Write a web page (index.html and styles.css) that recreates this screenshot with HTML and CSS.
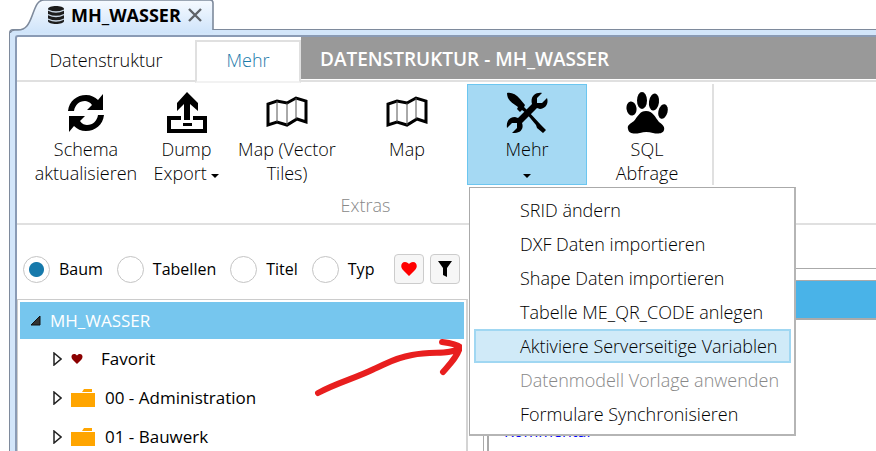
FILE: index.html
```html
<!DOCTYPE html>
<html lang="de">
  <head>
    <meta charset="UTF-8" />
    <meta name="viewport" content="width=device-width, initial-scale=1.0" />
    <title>MH_WASSER</title>
    <link rel="stylesheet" href="styles.css" />
  </head>
  <body>
    <div class="doc-tabs">
      <svg class="doc-tab-shape" width="206" height="33" viewBox="0 0 206 33">
        <defs>
          <linearGradient id="tabFill" x1="0" y1="0" x2="0" y2="1">
            <stop offset="0" stop-color="#f6faff" />
            <stop offset="1" stop-color="#cfe4fa" />
          </linearGradient>
        </defs>
        <path d="M0 33V32Q1 30 5 30H8C16 30 19 24 22 16C26 5 28 0 34 0H200Q203 0 203 3V33Z" fill="url(#tabFill)" />
        <path d="M0 33Q1 30 5 30H8C16 30 19 24 22 16C26 5 28 0 34 0H200Q203 0 203 3V30" fill="none" stroke="#7e8a9c" stroke-width="1.6" />
      </svg>
      <div class="doc-tab">
        <svg width="16" height="18" viewBox="0 0 16 18">
          <path d="M0 3C0-1 16-1 16 3V15C16 19 0 19 0 15Z" fill="#1c1c1c" />
          <path d="M0 4Q8 8 16 4M0 8.500Q8 12.500 16 8.500M0 13Q8 17 16 13" fill="none" stroke="#c9d6e4" stroke-width="1.300" />
        </svg>
        <span>MH_WASSER</span>
        <button class="close-btn" aria-label="Schließen">
          <svg width="14" height="14" viewBox="0 0 14 14">
            <path d="M1 1L13 13M13 1L1 13" stroke="#5f6368" stroke-width="2.400" />
          </svg>
        </button>
      </div>
    </div>

    <div class="frame">
      <div class="frame-inner">
        <header class="ribbon-tabs">
          <button class="ribbon-tab">Datenstruktur</button>
          <button class="ribbon-tab active">Mehr</button>
          <div class="ribbon-title">DATENSTRUKTUR - MH_WASSER</div>
        </header>

        <div class="ribbon">
          <div class="group">
            <div class="tools">
              <button class="tool tool-schema">
                <svg width="42" height="42" viewBox="0 0 42 42">
                  <g id="arrowHalf">
                    <path d="M3 19C4 9 12 3 21 3C26 3 30 5 33 8L38 2V18H22L27 13C25 10 22 9 20 9C14 9 10 13 9 19Z" />
                  </g>
                  <use href="#arrowHalf" transform="rotate(180 21 21)" />
                </svg>
                <span>Schema<br />aktualisieren</span>
              </button>
              <button class="tool tool-dump">
                <svg width="42" height="42" viewBox="0 0 42 42">
                  <path d="M21 0L32 11V19L24 12V28H18V12L11 19V11Z" />
                  <path d="M1 24H15V28H5V37H37V28H27V24H41V41H1Z" />
                  <path d="M17 31H26V34H17Z" />
                </svg>
                <span>Dump<br />Export <i class="caret"></i></span>
              </button>
              <button class="tool">
                <svg width="42" height="42" viewBox="0 0 42 42">
                  <path d="M2 12V33L11 30L21 33L31 27L40 30V9L30 6L21 11L11 9Z" fill="none" stroke="#000" stroke-width="3" />
                  <path d="M11 9V30M21 11V33M30 6V27" stroke="#555" stroke-width="1" />
                </svg>
                <span>Map (Vector<br />Tiles)</span>
              </button>
              <button class="tool">
                <svg width="42" height="42" viewBox="0 0 42 42">
                  <path d="M2 12V33L11 30L21 33L31 27L40 30V9L30 6L21 11L11 9Z" fill="none" stroke="#000" stroke-width="3" />
                  <path d="M11 9V30M21 11V33M30 6V27" stroke="#555" stroke-width="1" />
                </svg>
                <span>Map</span>
              </button>
              <button class="tool open" aria-expanded="true">
                <svg width="42" height="42" viewBox="0 0 42 42">
                  <path d="M1 1C5 0 10 2 14 7L19 13L18 15L22 19L35 33L40 38L37 41L31 36L30 33L20 21L16 18L14 20L11 17L12 15C6 11 1 8 1 1Z" />
                  <path d="M36 1L31 6V11H36L41 6C43 12 39 17 34 17L31 16L16 31C18 36 15 41 9 41H6L11 36V31H6L1 36C0 30 3 25 9 25L12 26L26 12C24 5 29 0 36 1Z" />
                </svg>
                <span>Mehr<br /><i class="caret"></i></span>
              </button>
              <button class="tool">
                <svg width="42" height="42" viewBox="0 0 42 42">
                  <ellipse cx="5.500" cy="16.500" rx="5" ry="7" transform="rotate(-8 5.500 16.500)" />
                  <ellipse cx="16" cy="8.500" rx="5" ry="8.500" />
                  <ellipse cx="28" cy="10" rx="5" ry="8.500" transform="rotate(8 28 10)" />
                  <ellipse cx="37" cy="19.500" rx="4.500" ry="7.500" transform="rotate(15 37 19.500)" />
                  <path d="M20 19C27 19 29 25 33 30C37 33 39 35 38 38C37 42 31 42 27 41Q20 39 14 41C8 42 3 42 2 37C1 33 4 32 8 29C12 24 14 19 20 19Z" />
                </svg>
                <span>SQL<br />Abfrage</span>
              </button>
            </div>
            <div class="group-name">Extras</div>
          </div>
        </div>

        <main class="content">
          <section class="left">
            <form class="filter" onsubmit="return false">
              <label><input type="radio" name="view" checked />Baum</label>
              <label><input type="radio" name="view" />Tabellen</label>
              <label><input type="radio" name="view" />Titel</label>
              <label><input type="radio" name="view" />Typ</label>
              <div class="filter-btns">
                <button aria-label="Favoriten">
                  <svg width="16" height="14" viewBox="0 0 16 14">
                    <path d="M8 14L2 8C-1 5 0 0 4 0C6 0 7 1 8 2C9 1 10 0 12 0C16 0 17 5 14 8Z" fill="#f00" />
                  </svg>
                </button>
                <button aria-label="Filter">
                  <svg width="14" height="16" viewBox="0 0 14 16">
                    <path d="M0 0H14L9 7V16L5 14V7Z" />
                  </svg>
                </button>
              </div>
            </form>
            <ul class="tree">
              <li class="selected">
                <svg width="11" height="11" viewBox="0 0 11 11"><path d="M10 1V10H1Z" fill="#333" stroke="#111" /></svg>
                MH_WASSER
              </li>
              <li class="node">
                <svg width="9" height="14" viewBox="0 0 9 14"><path d="M1 1L8 7L1 13Z" fill="none" stroke="#222" stroke-width="1.500" /></svg>
                <svg class="heart" width="12" height="10" viewBox="0 0 16 14"><path d="M8 14L2 8C-1 5 0 0 4 0C6 0 7 1 8 2C9 1 10 0 12 0C16 0 17 5 14 8Z" fill="#8b0000" /></svg>
                Favorit
              </li>
              <li class="node">
                <svg width="9" height="14" viewBox="0 0 9 14"><path d="M1 1L8 7L1 13Z" fill="none" stroke="#222" stroke-width="1.500" /></svg>
                <svg class="folder" width="24" height="18" viewBox="0 0 24 18"><path d="M0 4H24V18H0ZM11 3L13 0H21V3Z" fill="#ffa500" /></svg>
                00 - Administration
              </li>
              <li class="node">
                <svg width="9" height="14" viewBox="0 0 9 14"><path d="M1 1L8 7L1 13Z" fill="none" stroke="#222" stroke-width="1.500" /></svg>
                <svg class="folder" width="24" height="18" viewBox="0 0 24 18"><path d="M0 4H24V18H0ZM11 3L13 0H21V3Z" fill="#ffa500" /></svg>
                01 - Bauwerk
              </li>
            </ul>
          </section>
          <section class="right">
            <div class="panel">
              <div class="panel-head"></div>
              <div class="panel-body">Kommentar</div>
            </div>
          </section>
        </main>
      </div>
    </div>

    <ul class="menu">
      <li><button>SRID ändern</button></li>
      <li><button>DXF Daten importieren</button></li>
      <li><button>Shape Daten importieren</button></li>
      <li><button>Tabelle ME_QR_CODE anlegen</button></li>
      <li><button class="hover">Aktiviere Serverseitige Variablen</button></li>
      <li><button disabled>Datenmodell Vorlage anwenden</button></li>
      <li><button>Formulare Synchronisieren</button></li>
    </ul>

    <svg class="marker" width="150" height="62" viewBox="0 0 150 62">
      <path d="M6 55C24 45 44 40 62 31C74 26 82 20 100 17C122 13 136 17 146 11M130 4C138 5 145 6 148 9C146 18 138 26 131 34" fill="none" stroke="#e81e1e" stroke-width="6" stroke-linecap="round" stroke-linejoin="round" />
    </svg>
  </body>
</html>
```
FILE: styles.css
```css
* {
  box-sizing: border-box;
}
body {
  margin: 0;
  position: relative;
  min-height: 100vh;
  overflow: hidden;
  background-color: #fff;
  color: #000;
  font-family: "Open Sans", "Noto Sans", sans-serif;
  font-size: 17px;
  display: flex;
  flex-direction: column;
}
button {
  margin: 0;
  padding: 0;
  border: 0;
  background: none;
  color: inherit;
  font: inherit;
}
ul {
  list-style: none;
  margin: 0;
  padding: 0;
}
svg {
  flex: none;
}

/* document tab */
.doc-tabs {
  position: relative;
  height: 29px;
}
.doc-tab-shape {
  position: absolute;
  left: 10px;
  top: 0;
  z-index: 1;
}
.doc-tab {
  position: relative;
  z-index: 2;
  display: flex;
  align-items: center;
  gap: 7px;
  height: 30px;
  padding-left: 48px;
  font-size: 18px;
  font-weight: 700;
}
.close-btn {
  display: flex;
}

/* window frame */
.frame {
  flex: 1;
  display: flex;
  margin-left: 9px;
  padding: 5px 0 0 5px;
  border: 1px solid #7e8a9c;
  border-width: 1px 0 0 1px;
  border-radius: 4px 0 0 0;
  background-color: #d3e6fa;
}
.frame-inner {
  flex: 1;
  display: flex;
  flex-direction: column;
  border: 2px solid #8a9bb5;
  border-width: 2px 0 0 2px;
  border-radius: 3px 0 0 0;
  background-color: #fff;
}

/* ribbon */
.ribbon-tabs {
  display: flex;
  height: 45px;
  border-bottom: 2px solid #e0e0e0;
}
.ribbon-tab {
  width: 178px;
  padding-top: 2px;
  font-size: 18px;
  font-weight: 300;
}
.ribbon-tab.active {
  width: 106px;
  height: 43px;
  margin-top: 3px;
  padding: 0 0 4px;
  border: 2px solid #e0e0e0;
  border-bottom-color: #f2f2f2;
  background-color: #fff;
  color: #1a7aaa;
}
.ribbon-title {
  flex: 1;
  height: 42px;
  padding-left: 19px;
  background-color: #999;
  color: #fff;
  font-size: 19px;
  font-weight: 600;
  line-height: 44px;
}
.ribbon {
  display: flex;
  height: 143px;
  padding-top: 2px;
  border-bottom: 2px solid #e0e0e0;
  font-size: 18px;
  font-weight: 300;
}
.group {
  width: 697px;
}
.tools {
  display: flex;
  justify-content: flex-end;
  height: 101px;
  border-right: 2px solid #e0e0e0;
  padding-right: 5px;
}
.tool {
  display: flex;
  flex-direction: column;
  align-items: center;
  width: 120px;
  padding-top: 8px;
  line-height: 24px;
}
.tool span {
  margin-top: 3px;
  white-space: nowrap;
}
.tool-dump {
  width: 81px;
}
.tool.open {
  border: 1px solid #6cc6f0;
  padding-top: 7px;
  background-color: #a5d9f3;
}
.caret {
  display: inline-block;
  border: 4px solid transparent;
  border-top-color: #000;
  border-bottom: 0;
  vertical-align: 2px;
}
.group-name {
  color: #888;
  line-height: 40px;
  text-align: center;
}

/* tree panel */
.content {
  flex: 1;
  display: flex;
}
.left {
  width: 451px;
  display: flex;
  flex-direction: column;
}
.filter {
  display: flex;
  align-items: center;
  height: 74px;
  padding: 14px 8px 0 6px;
  font-size: 16px;
}
.filter label {
  display: flex;
  align-items: center;
  gap: 9px;
  margin-right: 14px;
}
.filter input {
  appearance: none;
  width: 27px;
  height: 27px;
  margin: 0;
  border: 1px solid #c4c4c4;
  border-radius: 50%;
  background-color: #fff;
}
.filter input:checked {
  background-image: radial-gradient(circle, #1679ab 7px, #fff 8px);
}
.filter-btns {
  display: flex;
  gap: 6px;
  margin-left: auto;
}
.filter-btns button {
  display: flex;
  align-items: center;
  justify-content: center;
  width: 30px;
  height: 30px;
  border: 1px solid #ccc;
  border-radius: 4px;
  background-color: #f6f6f6;
}
.tree {
  flex: 1;
  padding: 2px;
  border: 1px solid #ccc;
  border-right: 2px solid #d4d4d4;
  border-bottom: 0;
}
.tree li {
  display: flex;
  align-items: center;
  height: 39px;
}
.tree .selected {
  height: 37px;
  padding-left: 10px;
  gap: 9px;
  background-color: #76c6ee;
  color: #fff;
}
.tree .node {
  padding-left: 33px;
}
.heart {
  margin: 0 18px 0 9px;
}
.folder {
  margin: 0 10px 0 9px;
}

/* detail panel */
.right {
  flex: 1;
  display: flex;
  margin: 43px 0 0 15px;
  border: 1px solid #aaa;
  border-width: 1px 0 0 1px;
  padding: 11px 0 0 3px;
}
.panel {
  flex: 1;
  border-left: 2px solid #aaa;
}
.panel-head {
  height: 40px;
  border: 2px solid #aaa;
  border-width: 1px 0 2px;
  background-color: #49b3e8;
}
.panel-body {
  padding: 100px 0 0 15px;
  color: #00f;
  font-size: 16px;
}

/* dropdown over the page */
.menu {
  position: absolute;
  left: 469px;
  top: 187px;
  z-index: 3;
  width: 327px;
  padding: 5px 3px 3px 4px;
  border: 1px solid #aaa;
  border-right: 2px solid #b5b5b5;
  border-bottom: 2px solid #b5b5b5;
  background-color: #fff;
}
.menu button {
  display: block;
  width: 100%;
  height: 34px;
  padding-left: 44px;
  border: 2px solid transparent;
  font-size: 18px;
  font-weight: 300;
  line-height: 28px;
  text-align: left;
  white-space: nowrap;
}
.menu .hover {
  border-color: #a0d7f2;
  background-color: #d0eaf8;
}
.menu button:disabled {
  color: #888;
}

/* hand drawn arrow */
.marker {
  position: absolute;
  left: 312px;
  top: 338px;
  z-index: 4;
}
```
